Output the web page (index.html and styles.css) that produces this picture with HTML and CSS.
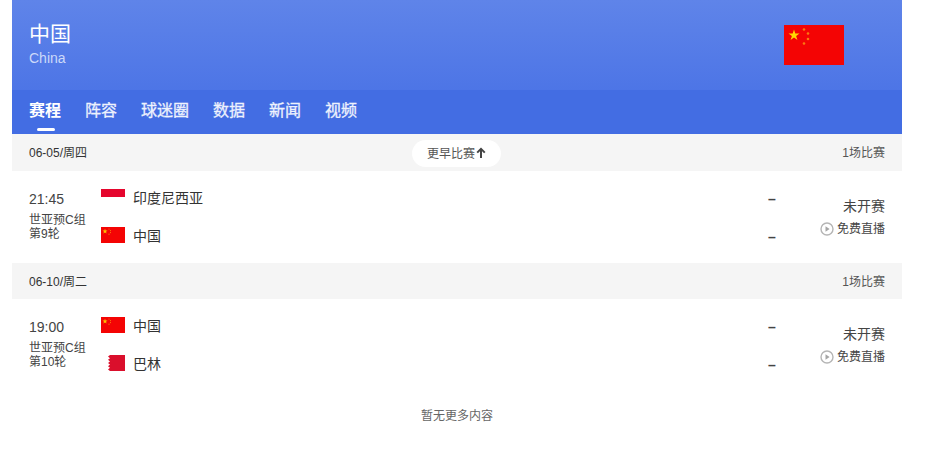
FILE: index.html
```html
<!DOCTYPE html>
<html lang="zh-CN">
<head>
    <meta charset="UTF-8">
    <title>中国</title>
    <link rel="stylesheet" href="styles.css">
</head>
<body>
    <div class="page">
        <div class="team-head">
            <div class="team-name">
                <div class="name-cn">中国</div>
                <div class="name-en">China</div>
            </div>
            <svg class="head-flag" viewBox="0 0 60 40" width="60" height="40">
                <rect width="60" height="40" fill="#f40404"/>
                <polygon points="10,4.5 11.3,8.4 15.5,8.4 12.1,10.9 13.4,14.9 10,12.4 6.6,14.9 7.9,10.9 4.5,8.4 8.7,8.4" fill="#ffd900"/>
                <circle cx="20" cy="4.5" r="1.3" fill="#fb7a10"/>
                <circle cx="24" cy="8.5" r="1.3" fill="#fb7a10"/>
                <circle cx="24" cy="14" r="1.3" fill="#fb7a10"/>
                <circle cx="20" cy="18.5" r="1.3" fill="#fb7a10"/>
            </svg>
        </div>
        <div class="tabs">
            <a class="tab active">赛程</a>
            <a class="tab">阵容</a>
            <a class="tab">球迷圈</a>
            <a class="tab">数据</a>
            <a class="tab">新闻</a>
            <a class="tab">视频</a>
        </div>

        <div class="date-bar first">
            <span class="date">06-05/周四</span>
            <span class="earlier">更早比赛<svg viewBox="0 0 10 12" width="10" height="12"><path d="M5 11V2M1.2 5.6 5 1.8l3.8 3.8" fill="none" stroke="#444" stroke-width="2"/></svg></span>
            <span class="count">1场比赛</span>
        </div>
        <div class="match">
            <div class="info">
                <div class="time">21:45</div>
                <div class="round">世亚预C组<br>第9轮</div>
            </div>
            <div class="teams">
                <div class="team">
                    <svg class="flag" viewBox="0 0 24 16" width="24" height="16"><rect width="24" height="8" fill="#e5062d"/></svg>
                    <span>印度尼西亚</span>
                </div>
                <div class="team">
                    <svg class="flag" viewBox="0 0 24 16" width="24" height="16"><rect width="24" height="16" fill="#f40404"/><polygon points="4,1.8 4.7,3.5 6.5,3.5 5,4.7 5.6,6.5 4,5.4 2.4,6.5 3,4.7 1.5,3.5 3.3,3.5" fill="#fbc400"/><circle cx="8" cy="2" r=".6" fill="#fb7a10"/><circle cx="9.5" cy="3.6" r=".6" fill="#fb7a10"/><circle cx="9.5" cy="5.6" r=".6" fill="#fb7a10"/><circle cx="8" cy="7.2" r=".6" fill="#fb7a10"/></svg>
                    <span>中国</span>
                </div>
            </div>
            <div class="scores"><span>–</span><span>–</span></div>
            <div class="status">
                <div class="state">未开赛</div>
                <div class="live">
                    <svg viewBox="0 0 14 14" width="14" height="14"><circle cx="7" cy="7" r="6" fill="none" stroke="#b5b5b5" stroke-width="1.4"/><polygon points="5.5,4.3 9.6,7 5.5,9.7" fill="#a5a5a5"/></svg>
                    免费直播
                </div>
            </div>
        </div>

        <div class="date-bar">
            <span class="date">06-10/周二</span>
            <span class="count">1场比赛</span>
        </div>
        <div class="match">
            <div class="info">
                <div class="time">19:00</div>
                <div class="round">世亚预C组<br>第10轮</div>
            </div>
            <div class="teams">
                <div class="team">
                    <svg class="flag" viewBox="0 0 24 16" width="24" height="16"><rect width="24" height="16" fill="#f40404"/><polygon points="4,1.8 4.7,3.5 6.5,3.5 5,4.7 5.6,6.5 4,5.4 2.4,6.5 3,4.7 1.5,3.5 3.3,3.5" fill="#fbc400"/><circle cx="8" cy="2" r=".6" fill="#fb7a10"/><circle cx="9.5" cy="3.6" r=".6" fill="#fb7a10"/><circle cx="9.5" cy="5.6" r=".6" fill="#fb7a10"/><circle cx="8" cy="7.2" r=".6" fill="#fb7a10"/></svg>
                    <span>中国</span>
                </div>
                <div class="team">
                    <svg class="flag" viewBox="0 0 24 16" width="24" height="16"><polygon points="24,0 9,0 7,1.6 9,3.2 7,4.8 9,6.4 7,8 9,9.6 7,11.2 9,12.8 7,14.4 9,16 24,16" fill="#da0f2c"/></svg>
                    <span>巴林</span>
                </div>
            </div>
            <div class="scores"><span>–</span><span>–</span></div>
            <div class="status">
                <div class="state">未开赛</div>
                <div class="live">
                    <svg viewBox="0 0 14 14" width="14" height="14"><circle cx="7" cy="7" r="6" fill="none" stroke="#b5b5b5" stroke-width="1.4"/><polygon points="5.5,4.3 9.6,7 5.5,9.7" fill="#a5a5a5"/></svg>
                    免费直播
                </div>
            </div>
        </div>

        <div class="no-more">暂无更多内容</div>
    </div>
</body>
</html>
```

FILE: styles.css
```css
body {
    margin: 0;
    background: #fff;
    font-family: "Liberation Sans", "Noto Sans CJK SC", sans-serif;
    color: #333;
}
.page {
    width: 890px;
    margin-left: 12px;
}
.team-head {
    height: 90px;
    padding: 0 58px 0 17px;
    box-sizing: border-box;
    background: linear-gradient(180deg, #5f84e9, #4d75e6);
    display: flex;
    justify-content: space-between;
    align-items: flex-start;
}
.team-name {
    padding-top: 21px;
    color: #fff;
}
.name-cn {
    font-size: 21px;
    line-height: 26px;
}
.name-en {
    font-size: 14px;
    line-height: 23px;
    color: #ccd9f9;
}
.head-flag {
    margin-top: 25px;
}
.tabs {
    height: 44px;
    padding-left: 17px;
    background: #436de3;
    display: flex;
    gap: 24px;
}
.tab {
    position: relative;
    font-size: 16px;
    line-height: 42px;
    color: #eef2fd;
    -webkit-text-stroke: 0.3px #eef2fd;
}
.tab.active {
    color: #fff;
    font-weight: bold;
    -webkit-text-stroke: 0;
}
.tab.active::after {
    content: "";
    position: absolute;
    left: 8px;
    bottom: 3px;
    width: 18px;
    height: 3px;
    border-radius: 2px;
    background: #fff;
}
.date-bar {
    height: 36px;
    padding: 0 17px 2px;
    box-sizing: border-box;
    background: #f5f5f5;
    display: flex;
    justify-content: space-between;
    align-items: center;
    position: relative;
    font-size: 12px;
}
.date-bar.first {
    height: 37px;
    padding-bottom: 3px;
}
.date {
    color: #333;
}
.count {
    color: #555;
}
.earlier {
    position: absolute;
    left: 400px;
    top: 6px;
    height: 27px;
    width: 89px;
    padding-bottom: 2px;
    box-sizing: border-box;
    border-radius: 14px;
    background: #fff;
    display: flex;
    justify-content: center;
    align-items: center;
    gap: 1px;
    color: #555;
}
.match {
    height: 92px;
    padding: 0 17px;
    display: flex;
    position: relative;
}
.info {
    width: 72px;
    padding-top: 19px;
}
.time {
    font-size: 14px;
    line-height: 18px;
    color: #444;
}
.round {
    margin-top: 5px;
    font-size: 12px;
    line-height: 14px;
    color: #444;
}
.teams {
    flex: 1;
    padding-top: 7px;
}
.team {
    height: 38px;
    display: flex;
    align-items: center;
    gap: 8px;
    font-size: 14px;
    color: #333;
}
.scores {
    width: 47px;
    padding-top: 9px;
}
.scores span {
    display: block;
    height: 38px;
    line-height: 38px;
    font-size: 14px;
    font-weight: bold;
    color: #444;
}
.status {
    width: 70px;
    padding-top: 25px;
    text-align: right;
}
.state {
    font-size: 14px;
    line-height: 20px;
    color: #444;
}
.live {
    margin-top: 3px;
    font-size: 12px;
    line-height: 20px;
    color: #444;
    white-space: nowrap;
    display: flex;
    justify-content: flex-end;
    align-items: center;
    gap: 3px;
}
.no-more {
    margin-top: 15px;
    text-align: center;
    font-size: 12px;
    line-height: 20px;
    color: #666;
}
```
